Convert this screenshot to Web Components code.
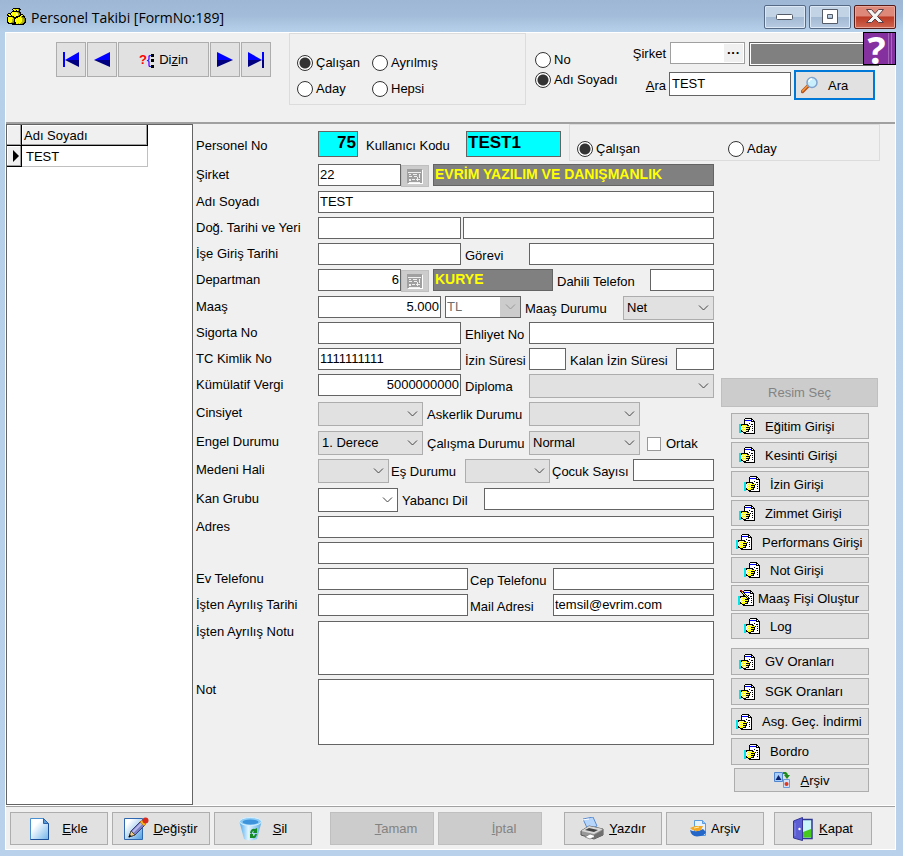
<!DOCTYPE html>
<html lang="tr">
<head>
  <meta charset="utf-8">
  <meta name="viewport" content="width=device-width, initial-scale=1">
  <title>Personel Takibi</title>
  <style>
    body {
      margin: 0;
      font: 13px/16px "Liberation Sans", Arial, sans-serif;
      color: #000;
      background: #b9d1ea;
    }
  </style>
</head>
<body>
  <app-window heading="Personel Takibi [FormNo:189]">
    <search-bar slot="top"></search-bar>
    <data-grid slot="list" heading="Adı Soyadı" rows="TEST"></data-grid>

    <form-row slot="head" head>
      <text-field label="Personel No" lw="122" w="40" value="75" kind="key" right></text-field>
      <text-field label="Kullanıcı Kodu" lw="100" w="95" value="TEST1" kind="key"></text-field>
      <radio-set name="durum" options="Çalışan|Aday" columns="1fr 1fr" boxed></radio-set>
    </form-row>

    <form-row h="23">
      <text-field label="Şirket" lw="122" w="83" value="22" picker></text-field>
      <text-field hint="Şirket adı" value="EVRİM YAZILIM VE DANIŞMANLIK" kind="info" grow></text-field>
    </form-row>
    <form-row>
      <text-field label="Adı Soyadı" lw="122" value="TEST" grow></text-field>
    </form-row>
    <form-row tight>
      <text-field label="Doğ. Tarihi ve Yeri" lw="122" w="143"></text-field>
      <text-field hint="Doğum yeri" grow></text-field>
    </form-row>
    <form-row>
      <text-field label="İşe Giriş Tarihi" lw="122" w="143"></text-field>
      <text-field label="Görevi" lw="64" grow></text-field>
    </form-row>
    <form-row h="23">
      <text-field label="Departman" lw="122" w="83" value="6" picker right></text-field>
      <text-field hint="Departman adı" w="120" value="KURYE" kind="info"></text-field>
      <text-field label="Dahili Telefon" lw="93" grow></text-field>
    </form-row>
    <form-row>
      <text-field label="Maaş" lw="122" w="123" value="5.000" right></text-field>
      <pick-list hint="Para birimi" w="76" options="TL" kind="off"></pick-list>
      <pick-list label="Maaş Durumu" lw="98" options="Net|Brüt" grow></pick-list>
    </form-row>
    <form-row>
      <text-field label="Sigorta No" lw="122" w="143"></text-field>
      <text-field label="Ehliyet No" lw="64" grow></text-field>
    </form-row>
    <form-row>
      <text-field label="TC Kimlik No" lw="122" w="143" value="1111111111"></text-field>
      <text-field label="İzin Süresi" lw="64" w="37"></text-field>
      <text-field label="Kalan İzin Süresi" lw="106" grow></text-field>
    </form-row>
    <form-row h="24">
      <text-field label="Kümülatif Vergi" lw="122" w="143" value="5000000000" right></text-field>
      <pick-list label="Diploma" lw="64" grow></pick-list>
    </form-row>
    <form-row h="25">
      <pick-list label="Cinsiyet" lw="122" w="105"></pick-list>
      <pick-list label="Askerlik Durumu" lw="102" w="111"></pick-list>
    </form-row>
    <form-row h="24">
      <pick-list label="Engel Durumu" lw="122" w="105" options="1. Derece|2. Derece|3. Derece"></pick-list>
      <pick-list label="Çalışma Durumu" lw="102" w="111" options="Normal|Emekli"></pick-list>
      <check-field label="Ortak"></check-field>
    </form-row>
    <form-row h="25" tight>
      <pick-list label="Medeni Hali" lw="122" w="71"></pick-list>
      <pick-list label="Eş Durumu" lw="74" w="85"></pick-list>
      <text-field label="Çocuk Sayısı" lw="81" grow></text-field>
    </form-row>
    <form-row h="24">
      <pick-list label="Kan Grubu" lw="122" w="80" kind="plain"></pick-list>
      <text-field label="Yabancı Dil" lw="82" grow></text-field>
    </form-row>
    <form-row>
      <text-field label="Adres" lw="122" grow></text-field>
    </form-row>
    <form-row>
      <text-field label="" hint="Adres devamı" lw="122" grow></text-field>
    </form-row>
    <form-row tight>
      <text-field label="Ev Telefonu" lw="122" w="150"></text-field>
      <text-field label="Cep Telefonu" lw="83" grow></text-field>
    </form-row>
    <form-row h="23" tight>
      <text-field label="İşten Ayrılış Tarihi" lw="122" w="150"></text-field>
      <text-field label="Mail Adresi" lw="83" value="temsil@evrim.com" grow></text-field>
    </form-row>
    <form-row h="54">
      <text-field label="İşten Ayrılış Notu" lw="122" lines grow></text-field>
    </form-row>
    <form-row h="66">
      <text-field label="Not" lw="122" lines grow></text-field>
    </form-row>

    <side-menu slot="side"></side-menu>
    <action-bar slot="bottom"></action-bar>
  </app-window>

  <script>
    // turns rows of characters into a pixel icon
    const COLORS = { k: '#000', w: '#fff', y: '#ffff00', o: '#ffffa0', c: '#00e5e5', b: '#0000ff', r: '#c00000', d: '#808000', g: '#b4b400' }

    function pixels (rows) {
      let out = ''
      rows.forEach((row, y) => {
        [...row].forEach((ch, x) => {
          if (COLORS[ch]) out += `<rect x="${x}" y="${y}" width="1" height="1" fill="${COLORS[ch]}"/>`
        })
      })
      return `<svg width="${rows[0].length}" height="${rows.length}" shape-rendering="crispEdges" aria-hidden="true">${out}</svg>`
    }

    const HAND = [
      '......kkkkkkk...',
      '.....kwwwwwwkk..',
      '.....kbbbbbbkwk.',
      '.....kwwwwwwkkkk',
      '.....kwwwwwwwwwk',
      '.....kwwwwkwwwwk',
      'cckkkkkkkwwwkkwk',
      'cckyoyoykkwwwwwk',
      'ccwoyoyoyyykwkwk',
      'ccwyoyokkkkwwwwk',
      'ccwoyoyoyykwwkwk',
      'ccwyoyokkkkwwwwk',
      'cckoyoyoykwwwkwk',
      'cckkyoykkkwwwwwk',
      'cc..kkkwwwwwwwwk',
      '.....kkkkkkkkkkk'
    ]
    const PEN = HAND.map((row, y) => {
      const pen = { 0: 'rr', 1: 'krr', 2: '.kyk', 3: '..kyk', 4: '...kyk', 5: '....kyk', 6: '.....kyk', 7: '......kyk', 8: '.......kk' }[y] || ''
      const shifted = '..' + pen
      return [...row].map((ch, x) => (shifted[x] && shifted[x] !== '.') ? shifted[x] : ch).join('')
    })

    const ICONS = {
      hand: pixels(HAND),
      pen: pixels(PEN),
      sacks: pixels([
        '......kkkkkkk......',
        '.....kyygyygkk.....',
        '......kyykygk......',
        '.....kkkkkkkk......',
        '....kyyyoygdkk.....',
        '.kkkyywyyoygdk.....',
        'kyykyyyyyooggkkk...',
        'kkyykyyyyoygkkyyk..',
        '.kkkkkkyykkkkygkkk.',
        'kyyyygkkkkkyyygddk.',
        'kywyyygkkyyyyyygddk',
        'kyyyyggkyywyyyyggdk',
        'kyyyyggkyyyyyyoggdk',
        'kyyyygdkyyyyyyyggdk',
        'kkyygddkkyyyyygggkk',
        '.kkkkkkkkyygyggdkk.',
        '.....kkkkkkkkkkkk..'
      ]),
      first: '<svg width="18" height="16" aria-hidden="true"><path d="M1 0h2v15H1zM17 0v8H3z" fill="#00f"/><path d="M3 8h14v7z" fill="#000080"/></svg>',
      prev: '<svg width="18" height="16" aria-hidden="true"><path d="M17 0v8H1z" fill="#00f"/><path d="M1 8h16v7z" fill="#000080"/></svg>',
      next: '<svg width="18" height="16" aria-hidden="true"><path d="M1 0v8h16z" fill="#00f"/><path d="M17 8H1v7z" fill="#000080"/></svg>',
      last: '<svg width="18" height="16" aria-hidden="true"><path d="M1 0v8h14zM15 0h2v8h-2z" fill="#00f"/><path d="M15 8H1v7zM15 8h2v8h-2z" fill="#000080"/></svg>',
      lens: '<svg width="18" height="18" aria-hidden="true"><path d="M1.500 15.500 7 10" stroke="#b5521c" stroke-width="3.500" stroke-linecap="round"/><path d="M1.500 15 6.500 10" stroke="#f59a3e" stroke-width="1.500" stroke-linecap="round"/><circle cx="11" cy="6.500" r="5" fill="#c9effc" stroke="#7fa3cf" stroke-width="1.500"/><path d="M8 6a3 3 0 0 1 3-3" stroke="#fff" stroke-width="1.500" fill="none"/></svg>',
      calendar: '<svg width="16" height="15" shape-rendering="crispEdges" aria-hidden="true"><path d="M1 1h15v14H1z" fill="#fff"/><path d="M0 0h15v14H0z" fill="#a0a0a0"/><path d="M1 3h13v1H1zM2 5h2v1H2zM6 5h4v1H6zM12 5h1v4h-1zM2 7h3v1H2zM7 7h3v1H7zM2 10h2v2H2zM5 10h3v1H5zM9 10h4v1H9zM10 8h1v4h-1zM2 13h11v1H2z" fill="#f0f0f0"/></svg>',
      chevron: '<svg width="11" height="6" aria-hidden="true"><path d="m1 .5 4.500 4.500L10 .5" fill="none" stroke="currentColor"/></svg>',
      page: '<svg width="28" height="24" aria-hidden="true"><defs><linearGradient id="pg" x1="0" y1="0" x2="1" y2="1"><stop offset=".3" stop-color="#fff"/><stop offset="1" stop-color="#6fb4ea"/></linearGradient></defs><path d="M.5 1.500h13l5 5v16H.5z" fill="url(#pg)" stroke="#4a90d0"/><path d="M18.500 6.500v16H.5" fill="none" stroke="#1d4f98"/><path d="M13.500 1.500v5h5z" fill="#5a9ad8" stroke="#2a62a8"/></svg>',
      edit: '<svg width="25" height="24" aria-hidden="true"><defs><linearGradient id="ed" x1="0" y1="0" x2="1" y2="1"><stop offset=".2" stop-color="#fff"/><stop offset="1" stop-color="#4e9ee2"/></linearGradient></defs><path d="M.5 1.500h18v21H.5z" fill="url(#ed)" stroke="#2f68b0"/><path d="m5 20 2-6L17 4l4 4L11 18z" fill="#7b7fc4" stroke="#3d3f7a"/><path d="m9 15 10-10" stroke="#b6b8ea" stroke-width="2"/><path d="m5 20 2-6 4 4z" fill="#f3c884" stroke="#554"/><path d="m4.500 20.500 1.200-3 1.800 1.800z"/><path d="m16 5 2-2 4 4-2 2z" fill="#f6b51e" stroke="#b06c00" stroke-width=".6"/><circle cx="21.500" cy="3.500" r="3" fill="#d9281c"/></svg>',
      bin: '<svg width="30" height="24" aria-hidden="true"><defs><linearGradient id="bn"><stop stop-color="#4aa8ec"/><stop offset=".4" stop-color="#e2f5ff"/><stop offset="1" stop-color="#5aaee8"/></linearGradient></defs><path d="M.5 5 5 22q6 3 13 0l4.500-17z" fill="url(#bn)"/><ellipse cx="11.500" cy="4.500" rx="11" ry="4" fill="#8ccbf5" stroke="#d6f0ff"/><ellipse cx="11.500" cy="5" rx="8" ry="2.500" fill="#3d94dc"/><path d="M11 16q1-5 5-4l2-1v5h-4l1-2q-2 0-2 3zM18 17q-1 5-4 4h-3v-4h3v2q2 0 2-2z" fill="#178a28"/></svg>',
      blank: '<svg width="24" height="24" aria-hidden="true"></svg>',
      printer: '<svg width="25" height="24" aria-hidden="true"><path d="m3 2 10-2 4 9-9 4z" fill="#b5d5fa" stroke="#5a8bd0"/><path d="m2 3 7-1" stroke="#fff"/><path d="m1 14 8-5 14 3v6l-9 4L1 18z" fill="#989898" stroke="#555"/><path d="m1 14 8-5 14 3-9 5z" fill="#d8d8d8"/><path d="m5 13 4-2 9 2-4 2z" fill="#444"/><path d="m5 20 5-3 6 2-6 3z" fill="#fff" stroke="#777" stroke-width=".7"/><path d="M14 18v4l9-4v-5z" fill="#707070"/></svg>',
      archive: '<svg width="17" height="17" aria-hidden="true"><path d="M4.500.5h8l3 3v12h-11z" fill="#e4f2ff" stroke="#5b9be0"/><path d="M12.500.5v3h3" fill="#9cc8f4" stroke="#5b9be0"/><path d="M0 10q6 3 13-1l3 3q-1 4-9 4.500Q1 16 0 10z" fill="#2467c8"/><path d="m0 8 5-2h8l-2 4q-6 3-11-2z" fill="#f3a722"/><path d="m4 8 5-1" stroke="#fff0b0"/></svg>',
      door: '<svg width="22" height="24" aria-hidden="true"><path d="M7 2.500h12v19H7z" fill="#c8f4fa" stroke="#2c3790" stroke-width="1.500"/><path d="m10 15 8-3v8.500h-8z" fill="#46c81e"/><path d="M.5 4 9.500.5v23L.5 21z" fill="#5d5ed2" stroke="#34349a"/><path d="M2 6v13" stroke="#8586ea"/><circle cx="6.500" cy="12" r="1.200" fill="#fff"/></svg>',
      swap: '<svg width="17" height="16" aria-hidden="true"><path d="M.5.5h8v9h-8z" fill="#a8cdf8" stroke="#4f86cf"/><path d="m1.500 8 3-5 3 5z" fill="#0c2270"/><path d="M9.500 7.500h6v8h-6z" fill="#cfe1fa" stroke="#6c9ad8"/><circle cx="12.500" cy="12" r="2" fill="#e0381e"/><path d="M9 0q4-1 5 3h2l-3 4-3-4h1.500Q11 2 9 2z" fill="#1d8c1d"/></svg>'
    }

    class AppWindow extends HTMLElement {
      constructor () {
        super()
        this.attachShadow({ mode: 'open' })
      }

      connectedCallback () {
        this.shadowRoot.innerHTML = `
          <style>
            :host {
              display: flex;
              flex-direction: column;
              box-sizing: border-box;
              min-height: 100vh;
              padding: 0 7px 6px 5px;
              background: linear-gradient(#9db7d5, #a3bcd9 16px, #b7d0ea 32px, #b9d1ea);
            }
            header {
              display: flex;
              align-items: center;
              gap: 3px;
              height: 32px;
              padding: 1px 0 0 2px;
              box-sizing: border-box;
            }
            h1 {
              flex: 1;
              margin: 0;
              padding: 2px 0 0 2px;
              font: 14px/20px "Open Sans", "Noto Sans", sans-serif;
            }
            header button {
              display: grid;
              place-items: center;
              width: 42px;
              height: 24px;
              padding: 0;
              border: 1px solid #566a85;
              border-radius: 2px;
              background: linear-gradient(#c2d3e6 50%, #a2b9d3 50%, #b8cce2);
              box-shadow: inset 0 0 0 1px #dce8f5;
            }
            header .close {
              border-color: #571b18;
              background: linear-gradient(#dd8878 45%, #bb3a26 50%, #cf6650);
              box-shadow: inset 0 0 0 1px #e9a79b;
            }
            .client {
              flex: 1;
              display: flex;
              flex-direction: column;
              border: 1px solid #fff;
              background: #f0f0f0;
            }
            .body {
              flex: 1;
              display: flex;
              border-bottom: 1px solid #fff;
            }
            .right {
              flex: 1;
              min-width: 0;
              padding: 0 15px 4px 3px;
            }
            .columns {
              display: flex;
              align-items: flex-start;
              gap: 7px;
              margin: 3px 2px 0 0;
            }
            .fields {
              flex: 1;
              min-width: 0;
              display: flex;
              flex-direction: column;
              gap: 4px;
            }
          </style>
          <header>
            ${ICONS.sacks}
            <h1>${this.getAttribute('heading')}</h1>
            <button type="button" aria-label="Küçült"><svg width="18" height="8"><rect x=".5" y="1.500" width="16" height="5" rx="1" fill="#fff" stroke="#555c68"/></svg></button>
            <button type="button" aria-label="Büyüt"><svg width="18" height="16"><path d="M1.500.5h15v14h-15zM6.500 5.500v4h5v-4z" fill="#fff" fill-rule="evenodd" stroke="#555c68"/></svg></button>
            <button type="button" class="close" aria-label="Pencereyi kapat"><svg width="20" height="17"><path d="m1.500 1.500h5l3.500 4 3.500-4h5l-6 7 6 6h-5l-3.500-3.500L6.500 14.500h-5l6-6z" fill="#f4f4f4" stroke="#5a4048"/></svg></button>
          </header>
          <div class="client">
            <slot name="top"></slot>
            <div class="body">
              <slot name="list"></slot>
              <div class="right">
                <slot name="head"></slot>
                <div class="columns">
                  <div class="fields"><slot></slot></div>
                  <slot name="side"></slot>
                </div>
              </div>
            </div>
            <slot name="bottom"></slot>
          </div>
        `
      }
    }

    class ToolButton extends HTMLElement {
      constructor () {
        super()
        this.attachShadow({ mode: 'open' })
      }

      connectedCallback () {
        const off = this.hasAttribute('off')
        const name = this.getAttribute('name')
        this.shadowRoot.innerHTML = `
          <style>
            :host {
              display: block;
              height: 26px;
            }
            button {
              display: flex;
              align-items: center;
              justify-content: center;
              gap: 4px;
              box-sizing: border-box;
              width: 100%;
              height: 100%;
              padding: 0;
              border: 1px solid #adadad;
              background: #e1e1e1;
              color: #000;
              font: inherit;
              white-space: nowrap;
            }
            button:hover { background: #e5f1fb; }
            button:disabled {
              border-color: #bfbfbf;
              background: #ccc;
              color: #838383;
            }
            svg { flex: none; }
            span { padding-top: 1px; }
            :host([inset]) button {
              justify-content: flex-start;
              gap: 10px;
              padding-left: 7px;
            }
            :host([inset="wide"]) button { padding-left: 12px; }
            :host([inset="narrow"]) button { padding-left: 4px; }
            :host([inset="close"]) button { gap: 4px; padding-left: 6px; }
            :host([spread]) button { gap: 10px; }
            :host([primary]) button {
              justify-content: flex-start;
              gap: 9px;
              padding-left: 5px;
              border: 2px solid #0078d7;
            }
          </style>
          <button type="button" ${off ? 'disabled' : ''} ${name ? `aria-label="${name}"` : ''}>${ICONS[this.getAttribute('icon')] || ''}<span><slot></slot></span></button>
        `
        if (name) this.shadowRoot.querySelector('span').remove()
      }
    }

    class RadioSet extends HTMLElement {
      constructor () {
        super()
        this.attachShadow({ mode: 'open' })
      }

      connectedCallback () {
        const checked = Number(this.getAttribute('checked') || 0)
        const items = this.getAttribute('options').split('|').map((text, i) =>
          `<label><input type="radio" name="${this.getAttribute('name')}" ${i === checked ? 'checked' : ''}>${text}</label>`)
        this.shadowRoot.innerHTML = `
          <style>
            :host {
              display: grid;
              grid-template-columns: ${this.getAttribute('columns') || '1fr'};
              align-content: center;
              row-gap: 4px;
              box-sizing: border-box;
            }
            :host([boxed]) {
              flex: 1;
              height: 37px;
              padding: 16px 0 0 7px;
              border: 1px solid #dcdcdc;
              align-content: start;
            }
            label {
              display: flex;
              align-items: center;
              gap: 3px;
              white-space: nowrap;
            }
            input {
              appearance: none;
              flex: none;
              width: 16px;
              height: 16px;
              margin: 0;
              border: 1px solid #333;
              border-radius: 50%;
              background: #fff;
            }
            input:checked { background: radial-gradient(circle, #333 5px, #fff 6px); }
          </style>
          ${items.join('')}
        `
      }
    }

    class FormRow extends HTMLElement {
      constructor () {
        super()
        this.attachShadow({ mode: 'open' })
      }

      connectedCallback () {
        this.shadowRoot.innerHTML = `
          <style>
            :host {
              display: flex;
              align-items: flex-start;
              gap: 4px;
              height: ${this.getAttribute('h') || 22}px;
            }
            :host([tight]) { gap: 2px; }
            :host([head]) {
              gap: 8px;
              height: 37px;
              align-items: center;
            }
          </style>
          <slot></slot>
        `
      }
    }

    const FIELD_CSS = `
      :host {
        display: flex;
        align-items: flex-start;
      }
      :host([grow]) {
        flex: 1;
        min-width: 0;
      }
      label {
        flex: none;
        padding-top: 3px;
        white-space: nowrap;
      }
      :host(:not(:first-child)) label { padding-top: 5px; }
      input, textarea, select {
        box-sizing: border-box;
        height: 22px;
        margin: 0;
        border: 1px solid #646464;
        border-radius: 0;
        background: #fff;
        color: #000;
        font: inherit;
        outline: none;
      }
      input, textarea { padding: 0 1px 2px; }
      :host([grow]) :is(input, textarea, .box) {
        flex: 1;
        min-width: 0;
      }
    `

    class TextField extends HTMLElement {
      constructor () {
        super()
        this.attachShadow({ mode: 'open' })
      }

      connectedCallback () {
        const attr = name => this.getAttribute(name) || ''
        const aria = attr('hint') ? `aria-label="${attr('hint')}"` : ''
        const control = this.hasAttribute('lines')
          ? `<textarea id="control" ${aria}></textarea>`
          : `<input id="control" type="text" value="${attr('value')}" ${aria}>`
        this.shadowRoot.innerHTML = `
          <style>
            ${FIELD_CSS}
            label { width: ${attr('lw')}px; }
            input { width: ${attr('w') || 20}px; }
            textarea {
              height: ${this.parentElement.getAttribute('h')}px;
              resize: none;
            }
            :host([right]) input { text-align: right; }
            :host([kind="info"]) input {
              background: #808080;
              color: #ff0;
              font-weight: bold;
              font-size: 14px;
            }
            :host([kind="key"]) { padding-top: 3px; }
            :host([kind="key"]) input {
              height: 26px;
              background: #0ff;
              font-weight: bold;
              font-size: 17px;
            }
            :host([kind="key"]) label { padding-top: 7px; }
            button {
              display: grid;
              place-items: center;
              box-sizing: border-box;
              width: 28px;
              height: 22px;
              margin-top: 1px;
              padding: 0;
              border: 1px solid #bfbfbf;
              background: #ccc;
            }
          </style>
          ${this.hasAttribute('label') ? `<label for="control">${attr('label')}</label>` : ''}
          ${control}
          ${this.hasAttribute('picker') ? `<button type="button" disabled aria-label="Seç">${ICONS.calendar}</button>` : ''}
        `
      }
    }

    class PickList extends HTMLElement {
      constructor () {
        super()
        this.attachShadow({ mode: 'open' })
      }

      connectedCallback () {
        const attr = name => this.getAttribute(name) || ''
        const options = attr('options').split('|').map(o => `<option>${o}</option>`).join('')
        this.shadowRoot.innerHTML = `
          <style>
            ${FIELD_CSS}
            label { width: ${attr('lw')}px; }
            .box {
              display: grid;
              grid-template-columns: 1fr 22px;
              width: ${attr('w') || 20}px;
              color: #444;
            }
            select {
              grid-area: 1 / 1 / 2 / 3;
              appearance: none;
              width: 100%;
              height: 24px;
              padding: 0 0 0 3px;
              border-color: #adadad;
              background: #e1e1e1;
            }
            .arrow {
              grid-area: 1 / 2;
              display: grid;
              place-items: center;
              pointer-events: none;
              z-index: 1;
            }
            :host([kind="plain"]) select {
              border-color: #646464;
              background: #fff;
            }
            :host([kind="off"]) select {
              height: 22px;
              padding-left: 1px;
              border-color: #646464;
              background: #fff;
              color: #6d6d6d;
              opacity: 1;
            }
            :host([kind="off"]) .arrow {
              margin: 1px;
              background: #ccc;
              color: #999;
            }
          </style>
          ${attr('label') ? `<label for="control">${attr('label')}</label>` : ''}
          <span class="box">
            <select id="control" ${attr('hint') ? `aria-label="${attr('hint')}"` : ''} ${attr('kind') === 'off' ? 'disabled' : ''}>${options}</select>
            <span class="arrow">${ICONS.chevron}</span>
          </span>
        `
      }
    }

    class CheckField extends HTMLElement {
      constructor () {
        super()
        this.attachShadow({ mode: 'open' })
      }

      connectedCallback () {
        this.shadowRoot.innerHTML = `
          <style>
            :host {
              display: block;
              padding: 5px 0 0 3px;
            }
            label {
              display: flex;
              align-items: center;
              gap: 5px;
            }
            input {
              appearance: none;
              width: 14px;
              height: 14px;
              margin: 0;
              border: 1px solid #999;
              background: #fff;
            }
            input:checked { background: #333; }
          </style>
          <label><input type="checkbox">${this.getAttribute('label')}</label>
        `
      }
    }

    class DataGrid extends HTMLElement {
      constructor () {
        super()
        this.attachShadow({ mode: 'open' })
      }

      connectedCallback () {
        const rows = this.getAttribute('rows').split('|').map(text => `
          <tr>
            <th scope="row" aria-label="Seçili"><svg width="7" height="12"><path d="M0 0v12l6-6z"/></svg></th>
            <td>${text}</td>
          </tr>`)
        this.shadowRoot.innerHTML = `
          <style>
            :host {
              display: block;
              box-sizing: border-box;
              width: 187px;
              border: 1px solid #646464;
              background: #fff;
            }
            table { border-collapse: separate; border-spacing: 0; }
            th, td {
              box-sizing: border-box;
              height: 21px;
              padding: 1px 2px 0;
              text-align: left;
              font-weight: normal;
            }
            th {
              border-right: 1px solid #000;
              border-bottom: 1px solid #000;
              background: #f0f0f0;
              box-shadow: inset -1px -1px #a0a0a0, inset 1px 1px #fff;
            }
            th:first-child {
              width: 15px;
              padding: 0 0 0 6px;
            }
            svg { display: block; }
            .name { width: 126px; }
            td {
              padding-left: 4px;
              border-right: 1px solid #c0c0c0;
              border-bottom: 1px solid #c0c0c0;
            }
          </style>
          <table>
            <thead><tr><th></th><th class="name" scope="col">${this.getAttribute('heading')}</th></tr></thead>
            <tbody>${rows.join('')}</tbody>
          </table>
        `
      }
    }

    class SearchBar extends HTMLElement {
      constructor () {
        super()
        this.attachShadow({ mode: 'open' })
      }

      connectedCallback () {
        this.shadowRoot.innerHTML = `
          <style>
            :host {
              position: relative;
              display: flex;
              align-items: flex-start;
              box-sizing: border-box;
              height: 91px;
              padding-left: 50px;
              border-bottom: 2px solid #a0a0a0;
            }
            nav {
              display: flex;
              gap: 1px;
              margin: 9px 18px 0 0;
            }
            nav tool-button { width: 30px; height: 35px; }
            nav .index { width: 91px; }
            .mark { color: #f00; font-weight: bold; }
            .brace { color: #00f; }
            .dots {
              display: inline-block;
              height: 14px;
              margin-right: 5px;
              border-left: 3px dotted #000;
              vertical-align: middle;
            }
            .state {
              flex: none;
              width: 237px;
              height: 72px;
              padding-top: 21px;
              row-gap: 10px;
            }
            .by { margin: 19px 0 0 9px; }
            .find {
              display: grid;
              gap: 4px;
              margin: 9px 16px 0 auto;
            }
            .line {
              display: flex;
              align-items: flex-start;
              justify-content: flex-end;
              gap: 4px;
            }
            .line + .line {
              gap: 3px;
              margin-right: 4px;
            }
            label { padding-top: 4px; }
            .line + .line label { padding-top: 8px; }
            .edit {
              display: flex;
              box-sizing: border-box;
              width: 75px;
              height: 22px;
              border: 1px solid #a0a0a0;
              background: #fff;
            }
            .edit input {
              flex: 1;
              min-width: 0;
              border: 0;
              padding: 0 2px;
            }
            .edit button {
              width: 19px;
              margin: 1px;
              padding: 0;
              border: 0;
              background: #f0f0f0;
              font: bold 13px/14px "Liberation Sans", Arial, sans-serif;
            }
            input {
              box-sizing: border-box;
              margin: 0;
              font: inherit;
            }
            .name {
              width: 130px;
              height: 24px;
              border: 1px solid #646464;
              background: #808080;
              box-shadow: inset 0 0 0 1px #fff;
            }
            #word {
              width: 122px;
              height: 24px;
              margin-top: 2px;
              padding: 0 2px 2px;
              border: 1px solid #646464;
            }
            .find tool-button { width: 81px; height: 30px; }
            /* sits over the corner of the bar */
            .help {
              position: absolute;
              top: -1px;
              right: -1px;
              width: 33px;
              height: 33px;
              padding: 0 6px 0 0;
              border: 1px solid #000;
              background: linear-gradient(90deg, #84319f 24px, #a465ba 24px 25px, #84319f 25px 27px, #a465ba 27px 28px, #84319f 28px);
              color: #fff;
              font: bold 38px/30px "Open Sans", sans-serif;
            }
          </style>
          <nav>
            <tool-button icon="first" name="İlk"></tool-button>
            <tool-button icon="prev" name="Önceki"></tool-button>
            <tool-button class="index"><span class="mark">?</span><span class="brace">{</span><span class="dots"></span>Di<u>z</u>in</tool-button>
            <tool-button icon="next" name="Sonraki"></tool-button>
            <tool-button icon="last" name="Son"></tool-button>
          </nav>
          <radio-set class="state" name="filtre" options="Çalışan|Ayrılmış|Aday|Hepsi" columns="75px 1fr" boxed></radio-set>
          <radio-set class="by" name="alan" options="No|Adı Soyadı" checked="1"></radio-set>
          <div class="find">
            <div class="line">
              <label for="firm">Şirket</label>
              <span class="edit"><input id="firm" type="text"><button type="button" aria-label="Şirket seç">···</button></span>
              <input class="name" type="text" readonly aria-label="Şirket adı">
            </div>
            <div class="line">
              <label for="word"><u>A</u>ra</label>
              <input id="word" type="text" value="TEST">
              <tool-button icon="lens" primary>Ara</tool-button>
            </div>
          </div>
          <button class="help" type="button">?</button>
        `
      }
    }

    class SideMenu extends HTMLElement {
      constructor () {
        super()
        this.attachShadow({ mode: 'open' })
      }

      connectedCallback () {
        this.shadowRoot.innerHTML = `
          <style>
            :host {
              display: block;
              flex: none;
              width: 157px;
            }
            .photo { height: 214px; }
            .select { height: 29px; }
            .group {
              display: grid;
              gap: 3px;
              margin: 6px 9px 0 10px;
            }
            .near { gap: 2px; margin-top: 2px; }
            .rates { margin-top: 9px; }
            .rates tool-button { height: 27px; }
            .archive { height: 24px; margin: 3px 9px 0 13px; }
          </style>
          <div class="photo"></div>
          <tool-button class="select" off>Resim Seç</tool-button>
          <div class="group">
            <tool-button icon="hand" inset>Eğitim Girişi</tool-button>
            <tool-button icon="hand" inset>Kesinti Girişi</tool-button>
            <tool-button icon="hand" inset="wide">İzin Girişi</tool-button>
            <tool-button icon="hand" inset>Zimmet Girişi</tool-button>
            <tool-button icon="hand" inset="narrow">Performans Girişi</tool-button>
          </div>
          <div class="group near">
            <tool-button icon="hand" inset="wide">Not Girişi</tool-button>
            <tool-button icon="pen" inset="close">Maaş Fişi Oluştur</tool-button>
            <tool-button icon="hand" inset="wide">Log</tool-button>
          </div>
          <div class="group rates">
            <tool-button icon="hand" inset>GV Oranları</tool-button>
            <tool-button icon="hand" inset>SGK Oranları</tool-button>
            <tool-button icon="hand" inset="narrow">Asg. Geç. İndirmi</tool-button>
            <tool-button icon="hand" inset="wide">Bordro</tool-button>
          </div>
          <tool-button class="archive" icon="swap" spread><u>A</u>rşiv</tool-button>
        `
      }
    }

    class ActionBar extends HTMLElement {
      constructor () {
        super()
        this.attachShadow({ mode: 'open' })
      }

      connectedCallback () {
        this.shadowRoot.innerHTML = `
          <style>
            :host {
              display: flex;
              padding: 5px 4px 4px;
              border-top: 1px solid #a0a0a0;
            }
            div {
              display: flex;
              gap: 4px;
              margin-right: 18px;
            }
            .print { margin: 0 10px 0 4px; }
            tool-button { width: 98px; height: 33px; }
            [off] { width: 104px; }
          </style>
          <div>
            <tool-button icon="page"><u>E</u>kle</tool-button>
            <tool-button icon="edit"><u>D</u>eğiştir</tool-button>
            <tool-button icon="bin"><u>S</u>il</tool-button>
          </div>
          <div>
            <tool-button icon="blank" off><u>T</u>amam</tool-button>
            <tool-button icon="blank" off><u>İ</u>ptal</tool-button>
          </div>
          <div class="print">
            <tool-button icon="printer"><u>Y</u>azdır</tool-button>
            <tool-button icon="archive">Arşiv</tool-button>
          </div>
          <tool-button icon="door"><u>K</u>apat</tool-button>
        `
      }
    }

    customElements.define('tool-button', ToolButton)
    customElements.define('radio-set', RadioSet)
    customElements.define('form-row', FormRow)
    customElements.define('text-field', TextField)
    customElements.define('pick-list', PickList)
    customElements.define('check-field', CheckField)
    customElements.define('data-grid', DataGrid)
    customElements.define('search-bar', SearchBar)
    customElements.define('side-menu', SideMenu)
    customElements.define('action-bar', ActionBar)
    customElements.define('app-window', AppWindow)
  </script>
</body>
</html>
